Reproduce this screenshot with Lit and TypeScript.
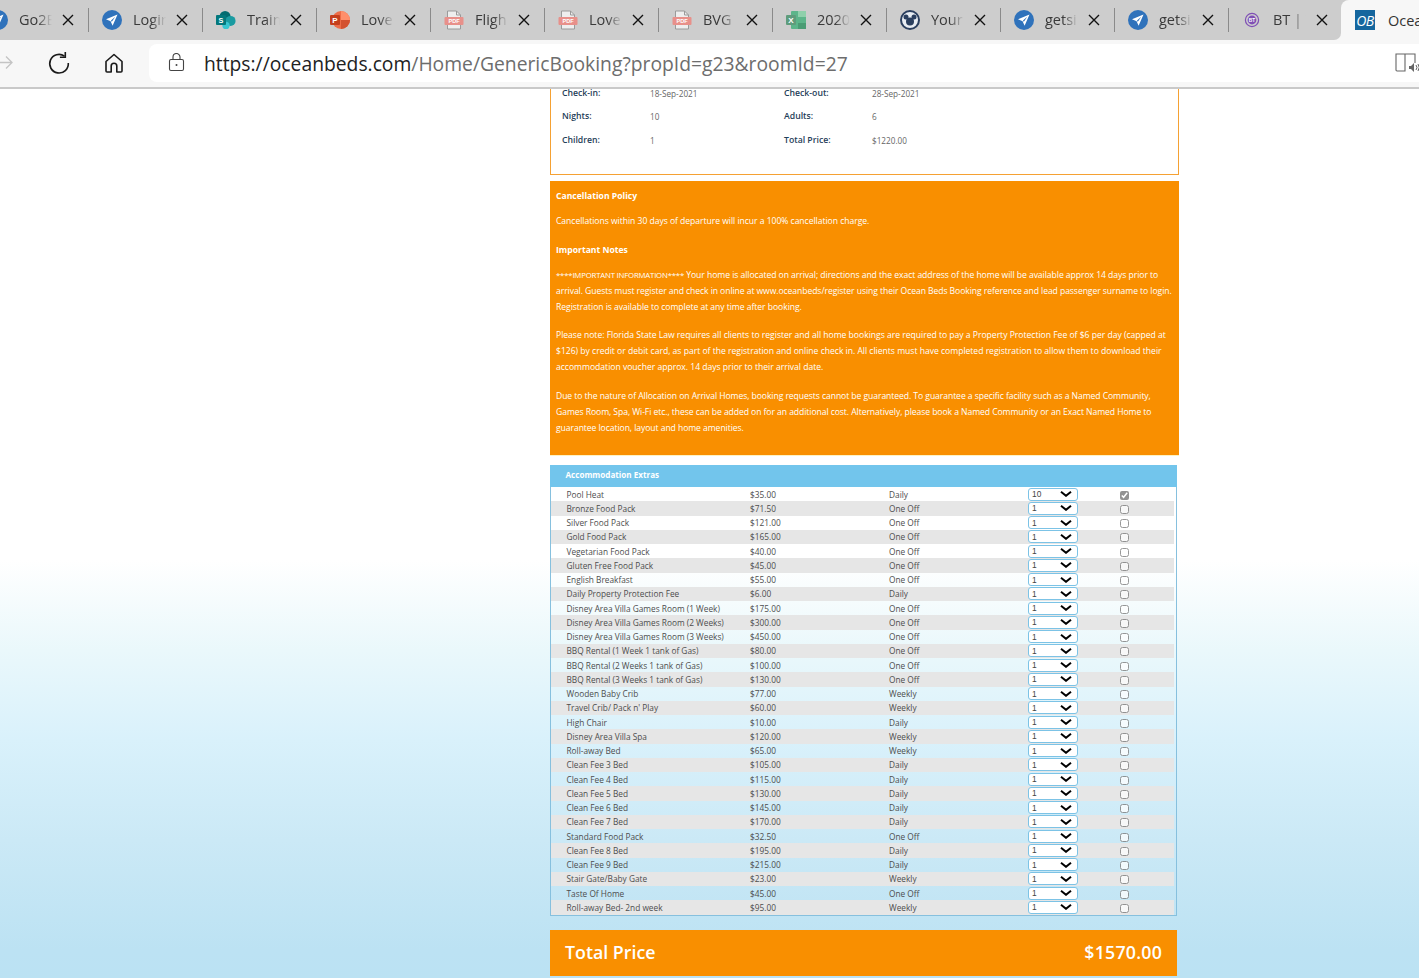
import { LitElement, html, css } from "lit";
import { customElement } from "lit/decorators.js";

const plane = html`<svg class="ic" viewBox="0 0 20 20"><circle cx="10" cy="10" r="10" fill="#2f72bb"/><path d="M15.5 4.5 4 9.2l4.6 2 2 4.6z" fill="#fff"/><path d="M13.2 6.8 9 10.4l.6 1.4.8-.9z" fill="#2f72bb"/></svg>`;
const pdf = html`<svg class="ic" viewBox="0 0 20 20"><path d="M3.5 1h9l4 4v14h-13z" fill="#eee" stroke="#9a9a9a"/><path d="M12.5 1v4h4" fill="none" stroke="#9a9a9a"/><rect x="0.5" y="7" width="19" height="8" rx="1" fill="#e8908a"/><text x="10" y="13.4" text-anchor="middle" class="pdft">PDF</text></svg>`;
const sp = html`<svg class="ic ic-w" viewBox="0 0 22 20"><circle cx="10" cy="6" r="6" fill="#036c70"/><circle cx="16" cy="11" r="5.5" fill="#1a9ba1"/><circle cx="11" cy="16" r="4" fill="#37c6d0"/><rect x="0" y="4.5" width="11" height="11" rx="1" fill="#03787c"/><text x="5.5" y="13" text-anchor="middle" class="lt">S</text></svg>`;
const ppt = html`<svg class="ic ic-w" viewBox="0 0 20 20"><circle cx="11" cy="10" r="9" fill="#ed6c47"/><path d="M11 1a9 9 0 0 1 9 9h-9z" fill="#ff8f6b"/><path d="M11 10h9a9 9 0 0 1-9 9z" fill="#d35230"/><rect x="0" y="5" width="10" height="10" rx="1" fill="#c43e1c"/><text x="5" y="13" text-anchor="middle" class="lt">P</text></svg>`;
const xls = html`<svg class="ic ic-w" viewBox="0 0 20 20"><rect x="5" y="1" width="15" height="18" rx="1" fill="#5cb58a"/><rect x="12" y="1" width="8" height="6" fill="#8fd0ab"/><rect x="12" y="13" width="8" height="6" fill="#4a9c74"/><rect x="0" y="5" width="10" height="10" rx="1" fill="#5f9c7c"/><text x="5" y="13" text-anchor="middle" class="lt">X</text></svg>`;
const mouse = html`<svg class="ic" viewBox="0 0 20 20"><circle cx="10" cy="10" r="9" fill="#e8edf3" stroke="#2a3f5f" stroke-width="2"/><circle cx="10" cy="11.5" r="4" fill="#2a3f5f"/><circle cx="6" cy="7" r="2.5" fill="#2a3f5f"/><circle cx="14" cy="7" r="2.5" fill="#2a3f5f"/></svg>`;
const bt = html`<svg class="ic" viewBox="0 0 20 20"><circle cx="10" cy="10" r="6.6" fill="none" stroke="#7f4fb5" stroke-width="1.2"/><circle cx="10" cy="10" r="4.4" fill="#7f4fb5"/><text x="10" y="11.7" text-anchor="middle" class="btt">BT</text></svg>`;
const ob = html`<span class="ob">OB</span>`;

const tabs = [
  [plane, "Go2E"], [plane, "Login"], [sp, "Train"], [ppt, "Love"], [pdf, "Fligh"], [pdf, "Love"],
  [pdf, "BVG"], [xls, "2020"], [mouse, "Your"], [plane, "getsi"], [plane, "getsi"], [bt, "BT | V"],
] as const;

const extras: [string, string, string][] = [
  ["Pool Heat", "$35.00", "Daily"], ["Bronze Food Pack", "$71.50", "One Off"], ["Silver Food Pack", "$121.00", "One Off"],
  ["Gold Food Pack", "$165.00", "One Off"], ["Vegetarian Food Pack", "$40.00", "One Off"], ["Gluten Free Food Pack", "$45.00", "One Off"],
  ["English Breakfast", "$55.00", "One Off"], ["Daily Property Protection Fee", "$6.00", "Daily"],
  ["Disney Area Villa Games Room (1 Week)", "$175.00", "One Off"], ["Disney Area Villa Games Room (2 Weeks)", "$300.00", "One Off"],
  ["Disney Area Villa Games Room (3 Weeks)", "$450.00", "One Off"], ["BBQ Rental (1 Week 1 tank of Gas)", "$80.00", "One Off"],
  ["BBQ Rental (2 Weeks 1 tank of Gas)", "$100.00", "One Off"], ["BBQ Rental (3 Weeks 1 tank of Gas)", "$130.00", "One Off"],
  ["Wooden Baby Crib", "$77.00", "Weekly"], ["Travel Crib/ Pack n' Play", "$60.00", "Weekly"], ["High Chair", "$10.00", "Daily"],
  ["Disney Area Villa Spa", "$120.00", "Weekly"], ["Roll-away Bed", "$65.00", "Weekly"], ["Clean Fee 3 Bed", "$105.00", "Daily"],
  ["Clean Fee 4 Bed", "$115.00", "Daily"], ["Clean Fee 5 Bed", "$130.00", "Daily"], ["Clean Fee 6 Bed", "$145.00", "Daily"],
  ["Clean Fee 7 Bed", "$170.00", "Daily"], ["Standard Food Pack", "$32.50", "One Off"], ["Clean Fee 8 Bed", "$195.00", "Daily"],
  ["Clean Fee 9 Bed", "$215.00", "Daily"], ["Stair Gate/Baby Gate", "$23.00", "Weekly"], ["Taste Of Home", "$45.00", "One Off"],
  ["Roll-away Bed- 2nd week", "$95.00", "Weekly"],
];

const summary = [
  ["Check-in:", "18-Sep-2021", "Check-out:", "28-Sep-2021"],
  ["Nights:", "10", "Adults:", "6"],
  ["Children:", "1", "Total Price:", "$1220.00"],
];

const x = html`<svg class="close" viewBox="0 0 12 12"><path d="M1 1l10 10M11 1 1 11" stroke="#111" stroke-width="1.4" fill="none"/></svg>`;

@customElement("app-root")
export class AppRoot extends LitElement {
  static styles = css`
    :host { display: block; height: 978px; overflow: hidden; font-family: "Open Sans", sans-serif;
      background: linear-gradient(180deg, #fff 0, #fff 560px, #eaf8fb 650px, #d9f1fb 740px, #cbe9f6 840px, #bce2f3 950px, #bbe2f3 978px); }
    .chrome { height: 87px; background: #f7f7f7; border-bottom: 2px solid #c9c9c9; box-sizing: content-box; display: flex; flex-direction: column; }
    .strip { height: 40px; display: flex; background: #f7f7f7; overflow: hidden; flex: none; }
    .tabs { flex: none; width: 1341px; background: #cdcdcd; border-bottom-right-radius: 7px; display: flex; align-items: center; overflow: hidden; }
    .tabs-in { display: flex; margin-left: -25px; flex: none; }
    .tab { width: 114px; flex: none; display: flex; align-items: center; height: 24px; box-sizing: border-box; border-right: 1px solid #8a8a8a; padding-left: 13px; }
    .ic { width: 20px; height: 20px; flex: none; display: block; }
    .label { margin-left: 11px; width: 33px; font-size: 14.5px; color: #3a3a3a; white-space: nowrap; overflow: hidden; flex: none;
      -webkit-mask-image: linear-gradient(90deg, #000 55%, transparent 100%); mask-image: linear-gradient(90deg, #000 55%, transparent 100%); line-height: 20px; }
    .close { width: 12px; height: 12px; margin-left: 10px; flex: none; }
    .active-wrap { flex: 1; background: #cdcdcd; display: flex; min-width: 0; }
    .active { flex: 1; background: #f7f7f7; border-top-left-radius: 8px; display: flex; align-items: center; padding-left: 14px; overflow: hidden; }
    .ob { width: 20px; height: 20px; background: #15669e; color: #fff; font-size: 14px; font-style: italic; display: flex; align-items: center; justify-content: center; flex: none; letter-spacing: -.5px; }
    .active .t { margin-left: 13px; font-size: 14.5px; color: #333; white-space: nowrap; }
    .pdft { font: 700 5.6px "Liberation Sans", sans-serif; fill: #fff; }
    .lt { font: 700 8px "Liberation Sans", sans-serif; fill: #fff; }
    .btt { font: 700 4.8px "Liberation Sans", sans-serif; fill: #fff; }
    .bar { height: 47px; display: flex; align-items: center; padding: 0 0 2px 0; box-sizing: border-box; }
    .navbtn { display: block; flex: none; }
    .fwd { margin-left: -3px; width: 17px; height: 17px; }
    .reload { margin-left: 33px; width: 24px; height: 24px; }
    .home { margin-left: 32px; width: 22px; height: 22px; }
    .addr { margin-left: 24px; flex: 1; height: 38px; background: #fff; border-radius: 8px 0 0 8px; display: flex; align-items: center; min-width: 0; }
    .lock { margin-left: 19px; width: 17px; height: 19px; flex: none; }
    .url { margin-left: 19px; font-size: 19.3px; color: #6d6d6d; white-space: nowrap; flex: 1; padding-top: 1px; }
    .url b { font-weight: 400; color: #222; }
    .read { width: 24px; height: 22px; flex: none; }
    .page { margin-left: 550px; width: 629px; }
    .box { border: 1px solid #f5a133; border-top: 0; padding: 0 11px; height: 86px; box-sizing: border-box; display: grid;
      grid-template-columns: 88px 134px 88px 1fr; grid-template-rows: 8.5px 9.5px 10.5px; align-content: start; row-gap: 14px; align-items: center; font-size: 8.2px; color: #666; }
    .box span { line-height: 9.5px; white-space: nowrap; }
    .box .k { color: #1f4059; font-weight: 600; font-size: 8.7px; }
    .notes { margin-top: 6px; height: 275px; box-sizing: border-box; background: #f98f00; border-bottom: 1px solid #fdf2c4; color: #fff; font-size: 8.6px; font-weight: 500; line-height: 16px; padding: 7px 6px 0; }
    .notes p { margin: 0; white-space: nowrap; }
    .notes h4 { margin: 0; font-size: 8.6px; font-weight: 700; line-height: 16px; }
    .n1 { margin-top: 9px !important; letter-spacing: -0.04px; }
    .n2 { margin-top: 13px !important; }
    .n3 { margin-top: 9px !important; letter-spacing: -0.05px; }
    .caps { font-size: 7.8px; letter-spacing: -.2px; }
    .tight { letter-spacing: -0.075px; }
    .n4 { margin-top: 12px !important; letter-spacing: -0.02px; }
    .n5 { margin-top: 13px !important; letter-spacing: -0.07px; }
    .table { width: 627px; }
    .head { margin-top: 9px; height: 22px; background: #72c5ec; color: #fff; font-size: 8.1px; font-weight: 700; display: flex; align-items: center; padding: 0 0 3px 15.5px; box-sizing: border-box; }
    .rows { border: 1px solid #86c0de; border-top: 0; padding-right: 2px; box-sizing: border-box; }
    .row { height: 14.25px; display: grid; grid-template-columns: 183.5px 139px 139px 92px 1fr; padding-left: 15.5px; align-items: center; font-size: 8.3px; color: #4d4d4d; white-space: nowrap; }
    .row:nth-child(even) { background: #e6e6e6; }
    .sel { position: relative; display: block; width: 50px; height: 13px; }
    .sel select { appearance: none; -webkit-appearance: none; display: block; width: 50px; height: 13px; box-sizing: border-box; border: 1px solid #7cc3e6; border-radius: 3px; background: #fff; font: 8.4px "Liberation Sans", sans-serif; color: #444; padding: 0 0 0 3px; margin: 0; }
    .sel svg { position: absolute; right: 6px; top: 3.5px; width: 12px; height: 6px; pointer-events: none; }
    .row input { width: 9px; height: 9px; margin: 2px 0 0 0; display: block; accent-color: #6e6e6e; opacity: .75; }
    .total { margin-top: 14px; height: 46px; background: #f98f00; color: #fff; font-size: 17.8px; font-weight: 600; display: flex; justify-content: space-between; align-items: center; padding: 0 15px 2px; box-sizing: border-box; }
    .amt { letter-spacing: .2px; }
  `;

  render() {
    return html`
      <div class="chrome">
        <div class="strip">
          <div class="tabs"><div class="tabs-in">
            ${tabs.map(([icon, t]) => html`<div class="tab">${icon}<span class="label">${t}</span>${x}</div>`)}
          </div></div>
          <div class="active-wrap"><div class="active">${ob}<span class="t">Ocean Beds</span></div></div>
        </div>
        <div class="bar">
          <svg class="navbtn fwd" viewBox="0 0 17 17"><path d="M1 8.5h14M9 2.5l6 6-6 6" fill="none" stroke="#c4c4c4" stroke-width="1.3"/></svg>
          <svg class="navbtn reload" viewBox="0 0 24 24"><path d="M17.5 5.2A9.3 9.3 0 1 0 21.3 12" fill="none" stroke="#1a1a1a" stroke-width="1.6"/><path d="M18.3 1v5.2h-5.4" fill="none" stroke="#1a1a1a" stroke-width="1.6"/></svg>
          <svg class="navbtn home" viewBox="0 0 22 22"><path d="M3 9.5 11 2.5l8 7V19a1 1 0 0 1-1 1h-4.2v-6a2.8 2.8 0 0 0-5.6 0v6H4a1 1 0 0 1-1-1z" fill="none" stroke="#1a1a1a" stroke-width="1.6" stroke-linejoin="round"/></svg>
          <div class="addr">
            <svg class="lock" viewBox="0 0 17 19"><rect x="1.5" y="6.5" width="14" height="11" rx="1.5" fill="none" stroke="#444" stroke-width="1.1"/><path d="M5 6.5V4a3.5 3.5 0 0 1 7 0v2.5" fill="none" stroke="#444" stroke-width="1.1"/><circle cx="8.5" cy="12" r="1" fill="#444"/></svg>
            <span class="url"><b>https://oceanbeds.com</b>/Home/GenericBooking?propId=g23&amp;roomId=27</span>
            <svg class="read" viewBox="0 0 24 22"><path d="M1 2h9v17H2a1 1 0 0 1-1-1zM10 2h10v9M10 3v16" fill="none" stroke="#666" stroke-width="1.1"/><path d="M14 14h2l3-3v9l-3-3h-2z" fill="#666"/><path d="M21 13a4 4 0 0 1 0 5M23 12a6 6 0 0 1 0 7" fill="none" stroke="#666" stroke-width="1"/></svg>
          </div>
        </div>
      </div>
      <div class="page">
        <div class="box">
          ${summary.map((r) => html`<span class="k">${r[0]}</span><span>${r[1]}</span><span class="k">${r[2]}</span><span>${r[3]}</span>`)}
        </div>
        <div class="notes">
          <h4>Cancellation Policy</h4>
          <p class="n1">Cancellations within 30 days of departure will incur a 100% cancellation charge.</p>
          <h4 class="n2">Important Notes</h4>
          <p class="n3"><span class="caps">****IMPORTANT INFORMATION****</span> Your home is allocated on arrival; directions and the exact address of the home will be available approx 14 days prior to<br><span class="tight">arrival. Guests must register and check in online at www.oceanbeds/register using their Ocean Beds Booking reference and lead passenger surname to login.</span><br>Registration is available to complete at any time after booking.</p>
          <p class="n4">Please note: Florida State Law requires all clients to register and all home bookings are required to pay a Property Protection Fee of $6 per day (capped at<br>$126) by credit or debit card, as part of the registration and online check in. All clients must have completed registration to allow them to download their<br>accommodation voucher approx. 14 days prior to their arrival date.</p>
          <p class="n5">Due to the nature of Allocation on Arrival Homes, booking requests cannot be guaranteed. To guarantee a specific facility such as a Named Community,<br>Games Room, Spa, Wi-Fi etc., these can be added on for an additional cost. Alternatively, please book a Named Community or an Exact Named Home to<br>guarantee location, layout and home amenities.</p>
        </div>
        <div class="table">
          <div class="head">Accommodation Extras</div>
          <div class="rows">
            ${extras.map(([n, p, t], i) => html`<div class="row">
              <span>${n}</span><span>${p}</span><span>${t}</span>
              <span class="sel"><select aria-label="Quantity"><option ?selected=${i !== 0}>1</option><option ?selected=${i === 0}>10</option></select>
                <svg viewBox="0 0 12 6"><path d="M1 .8l5 4L11 .8" fill="none" stroke="#000" stroke-width="2"/></svg></span>
              <input type="checkbox" ?checked=${i === 0} aria-label="Select" />
            </div>`)}
          </div>
          <div class="total"><span>Total Price</span><span class="amt">$1570.00</span></div>
        </div>
      </div>
    `;
  }
}
